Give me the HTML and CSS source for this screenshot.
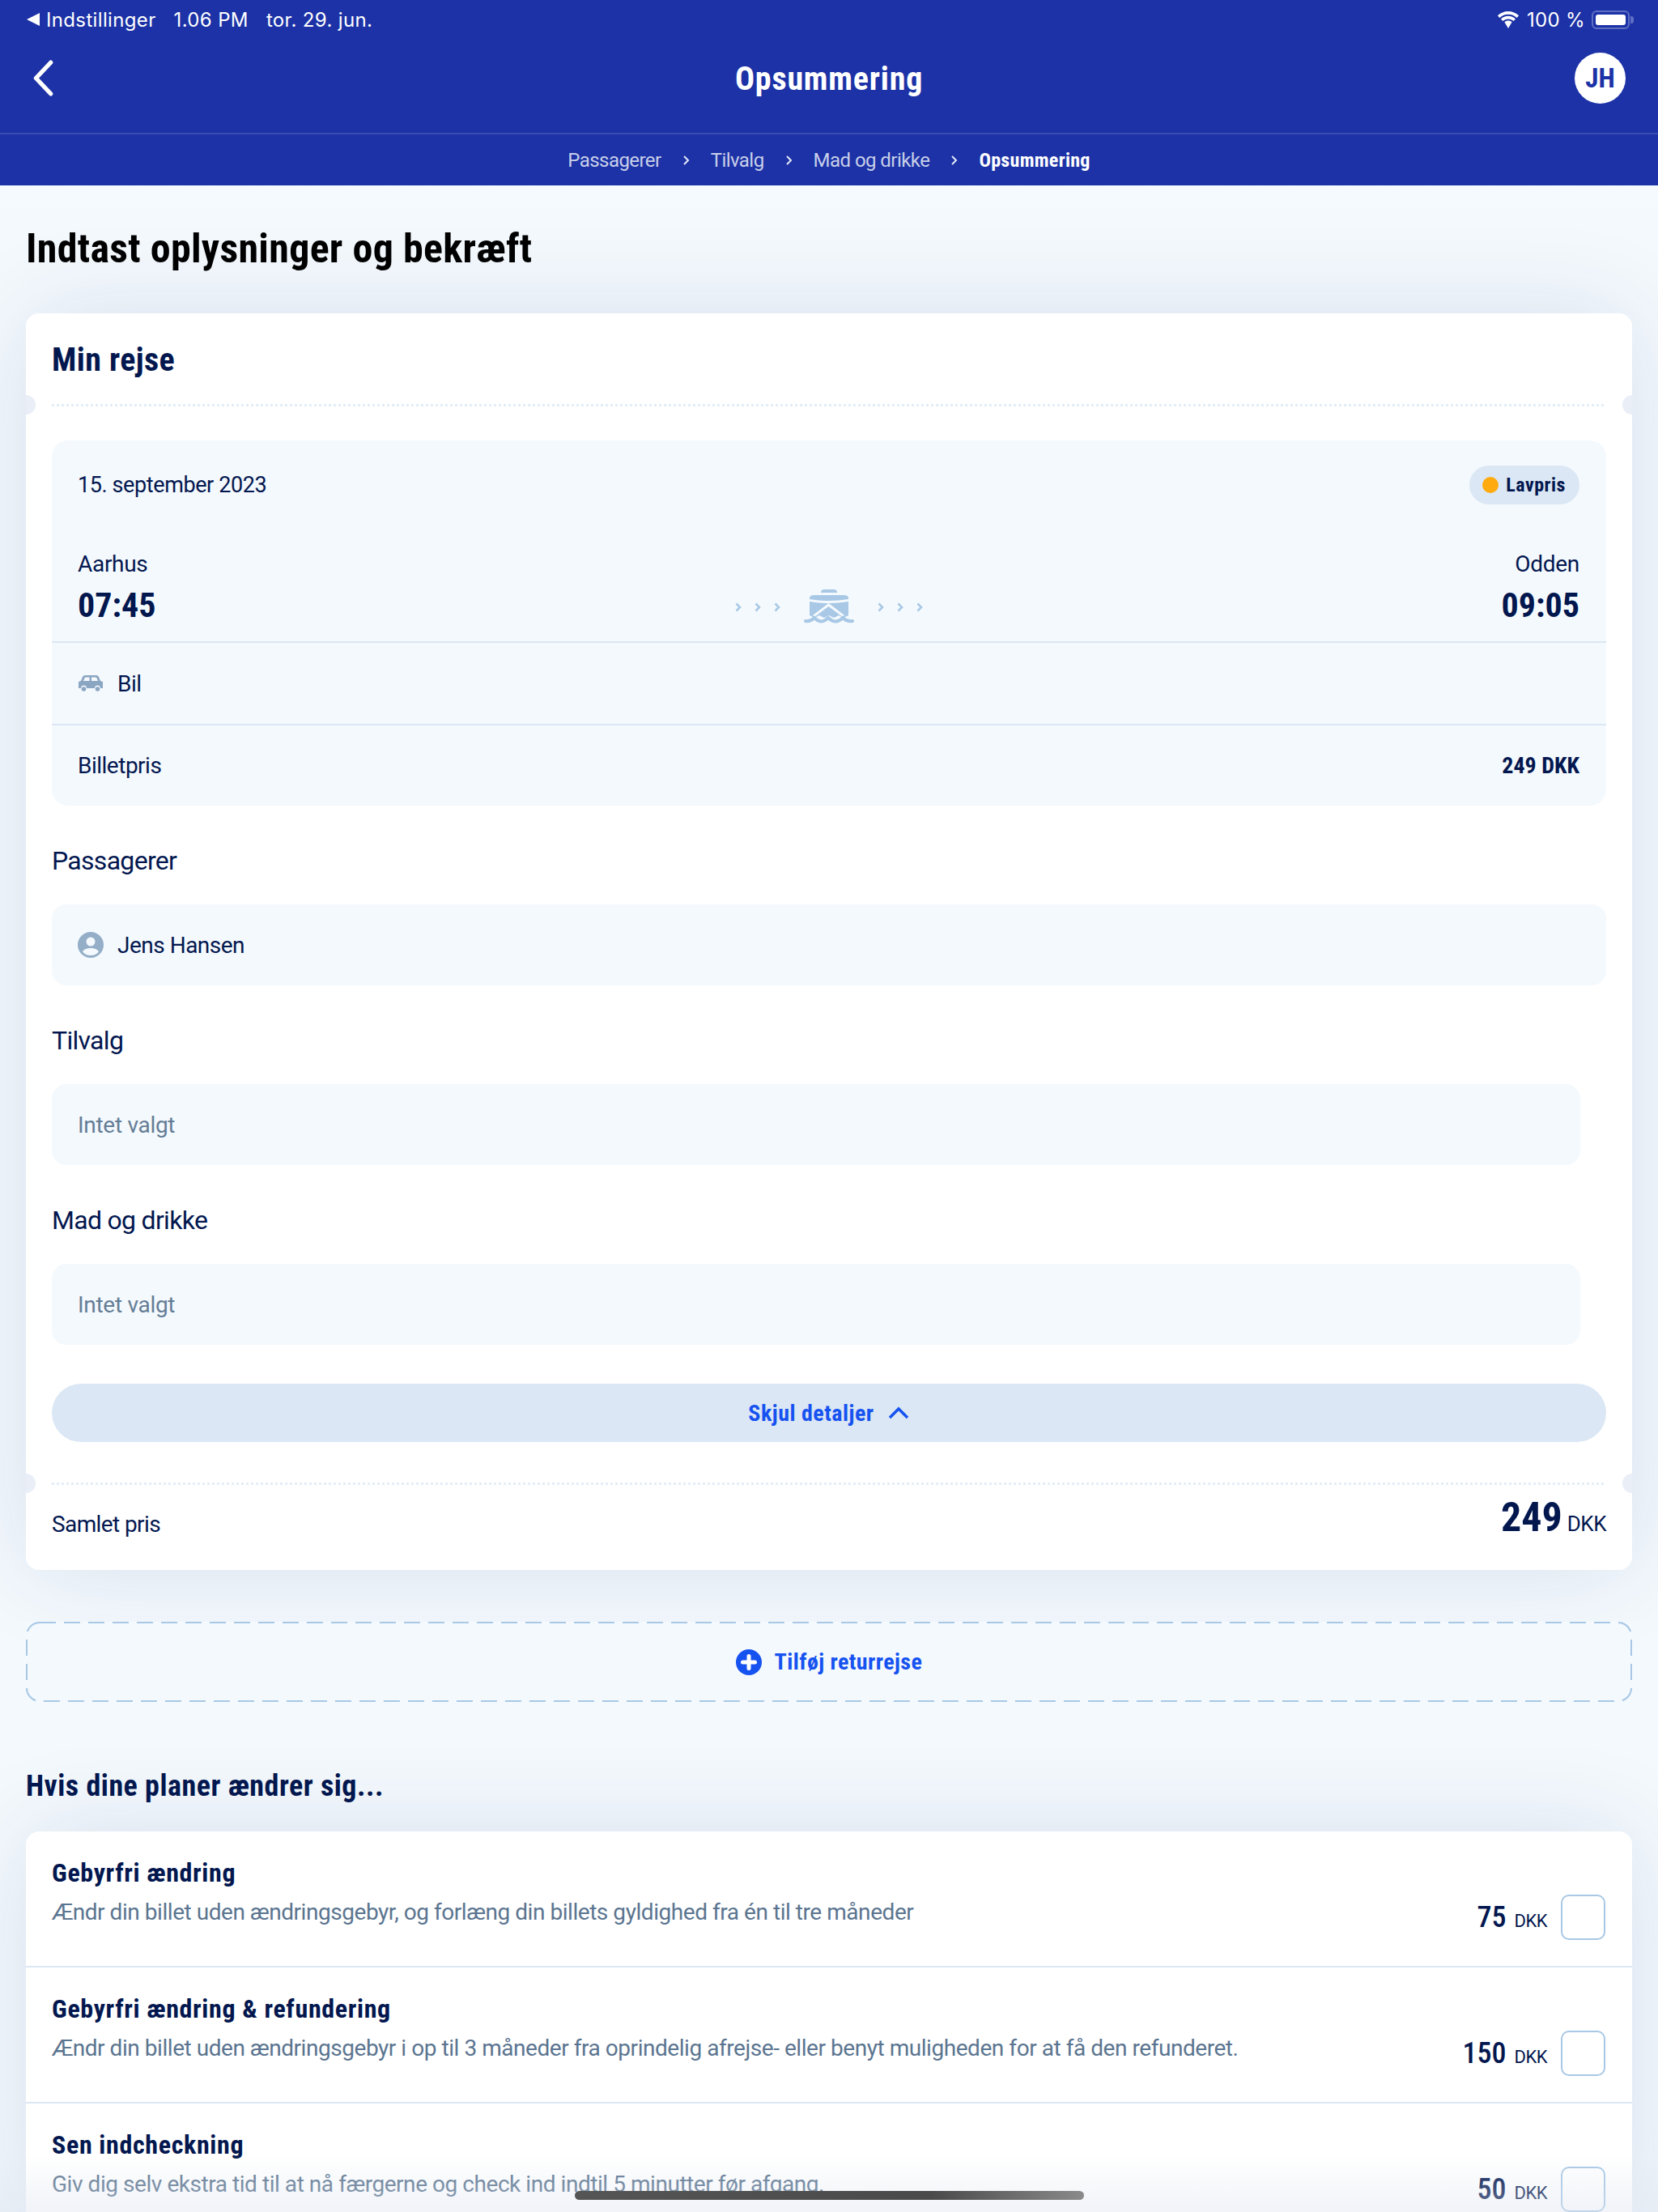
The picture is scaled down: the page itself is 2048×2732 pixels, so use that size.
FILE: index.html
```html
<!DOCTYPE html>
<html lang="da">
<head>
  <meta charset="UTF-8" />
  <title>Opsummering</title>
  <link rel="stylesheet" href="styles.css">
</head>
<body>
  <header class="header">
    <div class="status">
      <div class="status-left">
        <span class="status-back"></span>
        <span class="status-app">Indstillinger</span>
        <span>1.06 PM</span>
        <span>tor. 29. jun.</span>
      </div>
      <div class="status-right">
        <svg class="wifi" viewBox="0 0 28 22"><path d="M14 4.500c3.900 0 7.500 1.500 10.200 4l2.300-2.500C23.200 2.900 18.800 1 14 1S4.800 2.900 1.500 6l2.300 2.500c2.700-2.500 6.300-4 10.200-4zM14 10c2.400 0 4.600.9 6.300 2.500l2.300-2.500C20.300 7.800 17.300 6.500 14 6.500S7.700 7.800 5.400 10l2.300 2.500C9.400 10.900 11.600 10 14 10zM14 12c-1.700 0-3.200.6-4.400 1.700L14 21l4.400-7.300C17.200 12.600 15.700 12 14 12z"/></svg>
        <span>100 %</span>
        <span class="battery"><span class="battery-fill"></span></span>
      </div>
    </div>
    <div class="topbar">
      <a class="back"><svg viewBox="0 0 24 42"><path d="M21 3 4 21l17 18"/></svg></a>
      <h1>Opsummering</h1>
      <div class="avatar-wrap"><div class="avatar">JH</div></div>
    </div>
    <nav class="crumbs">
      <span>Passagerer</span>
      <svg class="crumb-sep" viewBox="0 0 9 14"><path d="M2 2l5 5-5 5"/></svg>
      <span>Tilvalg</span>
      <svg class="crumb-sep" viewBox="0 0 9 14"><path d="M2 2l5 5-5 5"/></svg>
      <span>Mad og drikke</span>
      <svg class="crumb-sep" viewBox="0 0 9 14"><path d="M2 2l5 5-5 5"/></svg>
      <span class="crumb-active">Opsummering</span>
    </nav>
  </header>

  <main class="page">
    <h2 class="page-title">Indtast oplysninger og bekræft</h2>

    <section class="card trip-card">
      <h3 class="card-title">Min rejse</h3>
      <div class="ticket-line"></div>

      <div class="trip">
        <div class="trip-top">
          <div class="trip-date">15. september 2023</div>
          <div class="pill"><span class="pill-dot"></span>Lavpris</div>
        </div>
        <div class="route">
          <div class="stop">
            <div class="stop-name">Aarhus</div>
            <div class="stop-time">07:45</div>
          </div>
          <div class="route-mid">
            <div class="chevs">
              <svg viewBox="0 0 8 12"><path d="M1.500 1.500 6 6l-4.500 4.500"/></svg>
              <svg viewBox="0 0 8 12"><path d="M1.500 1.500 6 6l-4.500 4.500"/></svg>
              <svg viewBox="0 0 8 12"><path d="M1.500 1.500 6 6l-4.500 4.500"/></svg>
            </div>
            <svg class="ferry" viewBox="0 0 64 43">
              <path class="ferry-fill" d="M22 4Q22 0 26 0h12q4 0 4 4zM8 11q0-4 6-4h36q6 0 6 4v1Q32 16 8 12zM8 15Q32 19 56 15V32l-6 3-6-3-6 3-6-3-6 3-6-3-6 3-6-3z"/>
              <path class="ferry-cut" d="M13 33 31.500 19 50 33"/>
              <path class="ferry-wave" d="M3 39Q9 40 14 35 20 41 25 39 28 38 31 35 37 41 43 39 46 38 49 35 54 40 61 39"/>
            </svg>
            <div class="chevs">
              <svg viewBox="0 0 8 12"><path d="M1.500 1.500 6 6l-4.500 4.500"/></svg>
              <svg viewBox="0 0 8 12"><path d="M1.500 1.500 6 6l-4.500 4.500"/></svg>
              <svg viewBox="0 0 8 12"><path d="M1.500 1.500 6 6l-4.500 4.500"/></svg>
            </div>
          </div>
          <div class="stop stop-end">
            <div class="stop-name">Odden</div>
            <div class="stop-time">09:05</div>
          </div>
        </div>
        <div class="trip-row">
          <svg class="row-icon car" viewBox="0 0 32 22"><path d="M9 1h14q2 0 3 2l2 5 3 1v8h-3a3.500 3.500 0 0 0-7 0H11a3.500 3.500 0 0 0-7 0H1V9l3-1 2-5q1-2 3-2zm1 2.500q-1 0-1.500 1L7 8h7.500V3.500zm7 0V8h8l-1.500-3.500q-.5-1-1.500-1z"/><circle cx="7.500" cy="18" r="2.800"/><circle cx="24.500" cy="18" r="2.800"/></svg>
          <span>Bil</span>
        </div>
        <div class="trip-row trip-price">
          <span>Billetpris</span>
          <strong>249 DKK</strong>
        </div>
      </div>

      <h4 class="label">Passagerer</h4>
      <div class="box">
        <svg class="row-icon person" viewBox="0 0 32 32"><circle class="person-bg" cx="16" cy="16" r="16"/><circle class="person-fg" cx="16" cy="12" r="5.500"/><path class="person-fg" d="M6 24.500C8 21 12 20 16 20s8 1 10 4.500A13 13 0 0 1 16 29 13 13 0 0 1 6 24.500z"/></svg>
        <span>Jens Hansen</span>
      </div>

      <h4 class="label">Tilvalg</h4>
      <div class="box box-short box-empty">Intet valgt</div>

      <h4 class="label">Mad og drikke</h4>
      <div class="box box-short box-empty">Intet valgt</div>

      <button class="toggle">Skjul detaljer
        <svg viewBox="0 0 28 18"><path d="M3 15 14 4l11 11"/></svg>
      </button>

      <div class="ticket-line ticket-line-low"></div>
      <div class="total">
        <span class="total-label">Samlet pris</span>
        <span class="total-price"><b>249</b> DKK</span>
      </div>
    </section>

    <button class="add-return">
      <svg class="dash-frame" width="1984" height="99"><rect x="1" y="1" width="1982" height="97" rx="16"/></svg>
      <svg class="plus" viewBox="0 0 32 32"><circle cx="16" cy="16" r="16"/><path d="M16 8.500v15M8.500 16h15"/></svg>
      Tilføj returrejse
    </button>

    <h2 class="sub-title">Hvis dine planer ændrer sig...</h2>

    <section class="card options">
      <div class="option">
        <div class="option-text">
          <h5>Gebyrfri ændring</h5>
          <p>Ændr din billet uden ændringsgebyr, og forlæng din billets gyldighed fra én til tre måneder</p>
        </div>
        <div class="option-price"><b>75</b><span>DKK</span></div>
        <span class="check"></span>
      </div>
      <div class="option">
        <div class="option-text">
          <h5>Gebyrfri ændring &amp; refundering</h5>
          <p>Ændr din billet uden ændringsgebyr i op til 3 måneder fra oprindelig afrejse- eller benyt muligheden for at få den refunderet.</p>
        </div>
        <div class="option-price"><b>150</b><span>DKK</span></div>
        <span class="check"></span>
      </div>
      <div class="option">
        <div class="option-text">
          <h5>Sen indcheckning</h5>
          <p>Giv dig selv ekstra tid til at nå færgerne og check ind indtil 5 minutter før afgang.</p>
        </div>
        <div class="option-price"><b>50</b><span>DKK</span></div>
        <span class="check"></span>
      </div>
    </section>
  </main>

  <div class="bottom-fade"></div>
  <div class="home-bar"></div>
</body>
</html>
```

FILE: styles.css
```css
* {
  box-sizing: border-box;
}

html, body {
  height: 2732px;
  overflow: hidden;
}

body {
  margin: 0;
  position: relative;
  background: #f4f9fd;
  font-family: Roboto, "Noto Sans", sans-serif;
  letter-spacing: -0.5px;
  color: #03174f;
}

h1, h2, h3, h4, h5, p {
  margin: 0;
  font-weight: 400;
}

/* header */
.header {
  height: 229px;
  background: #1c32a6;
  color: #fff;
}

.status {
  height: 48px;
  padding: 0 30px 0 33px;
  display: flex;
  justify-content: space-between;
  align-items: center;
  font-family: Inter, sans-serif;
  font-size: 24px;
  letter-spacing: 0.35px;
}

.status-left {
  display: flex;
  align-items: center;
  gap: 22px;
}

.status-back {
  width: 0;
  height: 0;
  border-top: 8px solid transparent;
  border-bottom: 8px solid transparent;
  border-right: 16px solid #fff;
  margin-right: -14px;
}

.status-right {
  display: flex;
  align-items: center;
  gap: 8px;
}

.wifi {
  width: 30px;
  height: 23px;
  fill: #fff;
}

.battery {
  width: 47px;
  height: 23px;
  padding: 3px;
  border: 2px solid #5f70c4;
  border-radius: 6px;
  position: relative;
  display: block;
  margin-right: 5px;
}

.battery::after {
  content: "";
  position: absolute;
  right: -7px;
  top: 5px;
  width: 4px;
  height: 9px;
  background: #5f70c4;
  border-radius: 0 3px 3px 0;
}

.battery-fill {
  display: block;
  height: 100%;
  background: #fff;
  border-radius: 3px;
}

.topbar {
  height: 118px;
  padding: 0 40px 19px;
  display: grid;
  grid-template-columns: 1fr auto 1fr;
  align-items: center;
  border-bottom: 2px solid #3a4eb3;
}

.back svg {
  display: block;
  width: 26px;
  height: 45px;
  fill: none;
  stroke: #fff;
  stroke-width: 5;
  stroke-linecap: round;
  stroke-linejoin: round;
}

.topbar h1 {
  margin-top: 2px;
  font-size: 40px;
  font-weight: 700;
  font-stretch: 75%;
  letter-spacing: 0.8px;
}

.avatar-wrap {
  display: flex;
  justify-content: flex-end;
}

.avatar {
  width: 63px;
  height: 63px;
  border-radius: 50%;
  background: #fff;
  color: #1c32a6;
  font-size: 33px;
  font-weight: 700;
  font-stretch: 75%;
  letter-spacing: 0;
  display: flex;
  align-items: center;
  justify-content: center;
}

.crumbs {
  height: 63px;
  display: flex;
  align-items: center;
  justify-content: center;
  gap: 26px;
  font-size: 24px;
  letter-spacing: -0.55px;
  color: #c8cfe9;
}

.crumb-sep {
  width: 9px;
  height: 14px;
  fill: none;
  stroke: #e6e9f6;
  stroke-width: 2;
}

.crumb-active {
  color: #fff;
  font-weight: 700;
  font-stretch: 75%;
  letter-spacing: 0.3px;
}

/* page */
.page {
  padding: 0 32px;
  background: linear-gradient(#f5fafe, #f4f9fd 40px);
}

.page-title {
  height: 158px;
  padding-top: 48px;
  line-height: 60px;
  font-size: 50px;
  font-weight: 700;
  font-stretch: 75%;
  letter-spacing: 0.3px;
  color: #000;
}

.card {
  background: #fff;
  border-radius: 16px;
  overflow: hidden;
  box-shadow: 0 0 120px rgba(24, 50, 120, 0.12);
}

.trip-card {
  height: 1552px;
  padding: 0 32px;
}

.card-title {
  height: 112px;
  padding-top: 32px;
  line-height: 52px;
  font-size: 40px;
  font-weight: 700;
  font-stretch: 75%;
  letter-spacing: 0.4px;
}

.ticket-line {
  position: relative;
  border-top: 3px dotted #e3edf7;
  margin-right: 3px;
}

.ticket-line::before,
.ticket-line::after {
  content: "";
  position: absolute;
  top: -14px;
  width: 24px;
  height: 24px;
  border-radius: 50%;
  background: #e9eef7;
}

.ticket-line::before {
  left: -44px;
}

.ticket-line::after {
  right: -47px;
}

.trip {
  margin-top: 42px;
  background: #f4f9fd;
  border-radius: 20px;
}

.trip-top {
  padding: 31px 33px 0 32px;
  display: flex;
  justify-content: space-between;
  align-items: center;
}

.trip-date {
  font-size: 27px;
  letter-spacing: -0.4px;
}

.pill {
  height: 48px;
  padding: 0 17px 0 16px;
  display: flex;
  align-items: center;
  gap: 9px;
  background: #dbe7f4;
  border-radius: 24px;
  font-size: 24px;
  font-weight: 700;
  font-stretch: 75%;
  letter-spacing: 0.5px;
}

.pill-dot {
  width: 20px;
  height: 20px;
  border-radius: 50%;
  background: #ffab0f;
}

.route {
  margin-top: 54px;
  padding: 0 33px 18px 32px;
  display: grid;
  grid-template-columns: 1fr auto 1fr;
  align-items: end;
}

.stop-name {
  font-size: 28px;
  line-height: 40px;
  letter-spacing: -0.3px;
}

.stop-time {
  margin-top: 5px;
  font-size: 42px;
  line-height: 52px;
  font-weight: 700;
  font-stretch: 75%;
  letter-spacing: 0;
}

.stop-end {
  text-align: right;
}

.route-mid {
  display: flex;
  align-items: center;
  gap: 28px;
  margin-bottom: 3px;
}

.ferry {
  width: 64px;
  height: 43px;
}

.ferry-fill {
  fill: #a8c8e6;
}

.ferry-cut {
  fill: none;
  stroke: #f4f9fd;
  stroke-width: 3;
}

.ferry-wave {
  fill: none;
  stroke: #a8c8e6;
  stroke-width: 4;
  stroke-linecap: round;
}

.chevs {
  display: flex;
  gap: 16px;
  margin-top: 1px;
}

.chevs svg {
  width: 8px;
  height: 12px;
  fill: none;
  stroke: #a8c8e6;
  stroke-width: 2.500;
}

.trip-row {
  height: 102px;
  padding: 0 33px 0 32px;
  display: flex;
  align-items: center;
  gap: 17px;
  border-top: 2px solid #dbe7f4;
  font-size: 28px;
}

.trip-price {
  height: 101px;
  justify-content: space-between;
}

.trip-price strong {
  font-size: 28px;
  font-weight: 700;
  font-stretch: 75%;
  letter-spacing: 0;
}

.row-icon {
  width: 32px;
  flex: none;
}

.car {
  height: 22px;
  fill: #8ba6c2;
}

.person {
  height: 32px;
}

.person-bg {
  fill: #94aec8;
}

.person-fg {
  fill: #f4f9fd;
}

.label {
  margin-top: 46px;
  margin-bottom: 32px;
  line-height: 44px;
  font-size: 32px;
  letter-spacing: -0.7px;
}

.box {
  height: 100px;
  padding: 0 32px;
  display: flex;
  align-items: center;
  gap: 17px;
  background: #f4f9fd;
  border-radius: 18px;
  font-size: 28px;
}

.box-short {
  margin-right: 32px;
}

.box-empty {
  color: #647d96;
  letter-spacing: -0.3px;
}

.toggle {
  width: 100%;
  height: 72px;
  margin-top: 48px;
  border: none;
  border-radius: 36px;
  background: #dbe7f4;
  color: #1652f0;
  font-family: inherit;
  font-stretch: 75%;
  font-size: 28px;
  font-weight: 700;
  letter-spacing: 0.5px;
  display: flex;
  align-items: center;
  justify-content: center;
  gap: 16px;
}

.toggle svg {
  width: 28px;
  height: 18px;
  fill: none;
  stroke: #1652f0;
  stroke-width: 3.500;
}

.ticket-line-low {
  margin-top: 50px;
}

.total {
  height: 97px;
  display: flex;
  justify-content: space-between;
  align-items: center;
}

.total-label {
  font-size: 28px;
  letter-spacing: -0.6px;
}

.total-price {
  margin-bottom: 18px;
  font-size: 26px;
}

.total-price b {
  font-size: 50px;
  font-weight: 700;
  font-stretch: 75%;
  letter-spacing: 0;
}

.add-return {
  width: 100%;
  height: 99px;
  margin-top: 64px;
  border: none;
  position: relative;
  background: #f4f9fd;
  color: #1652f0;
  font-family: inherit;
  font-stretch: 75%;
  font-size: 28px;
  font-weight: 700;
  letter-spacing: 0.45px;
  display: flex;
  align-items: center;
  justify-content: center;
  gap: 16px;
}

.dash-frame {
  position: absolute;
  left: 0;
  top: 0;
}

.dash-frame rect {
  fill: none;
  stroke: #a8c8e6;
  stroke-width: 2;
  stroke-dasharray: 20 10;
}

.plus {
  width: 32px;
  height: 32px;
}

.plus circle {
  fill: #1652f0;
}

.plus path {
  fill: none;
  stroke: #fff;
  stroke-width: 5;
  stroke-linecap: round;
}

.sub-title {
  margin-top: 79px;
  margin-bottom: 31px;
  line-height: 50px;
  font-size: 36px;
  font-weight: 700;
  font-stretch: 75%;
  letter-spacing: 0.5px;
}

.option {
  height: 168px;
  padding: 29px 33px 0 32px;
  display: flex;
  align-items: flex-start;
  border-bottom: 2px solid #dbe7f4;
}

.option:last-child {
  border-bottom: none;
}

.option-text {
  flex: 1;
}

.option-text h5 {
  line-height: 44px;
  font-size: 32px;
  font-weight: 700;
  font-stretch: 75%;
  letter-spacing: 0.65px;
}

.option-text p {
  margin-top: 5px;
  line-height: 44px;
  font-size: 28px;
  letter-spacing: -0.45px;
  color: #5b7590;
}

.option-price {
  margin-top: 56px;
  display: flex;
  align-items: baseline;
  gap: 10px;
  font-size: 22px;
}

.option-price b {
  font-size: 36px;
  font-weight: 500;
  font-stretch: 75%;
  letter-spacing: 0;
}

.check {
  width: 55px;
  height: 56px;
  margin: 49px 0 0 17px;
  border: 2px solid #a8c8e6;
  border-radius: 10px;
  flex: none;
}

/* overlays */
.bottom-fade {
  position: absolute;
  left: 0;
  right: 0;
  bottom: 0;
  height: 70px;
  background: linear-gradient(rgba(224, 229, 240, 0), rgba(224, 229, 240, 0.45));
}

.home-bar {
  position: absolute;
  left: 710px;
  top: 2706px;
  width: 629px;
  height: 11px;
  border-radius: 6px;
  background: linear-gradient(90deg, #555, #4a4a4a 70%, #8a8a8a);
}
```
